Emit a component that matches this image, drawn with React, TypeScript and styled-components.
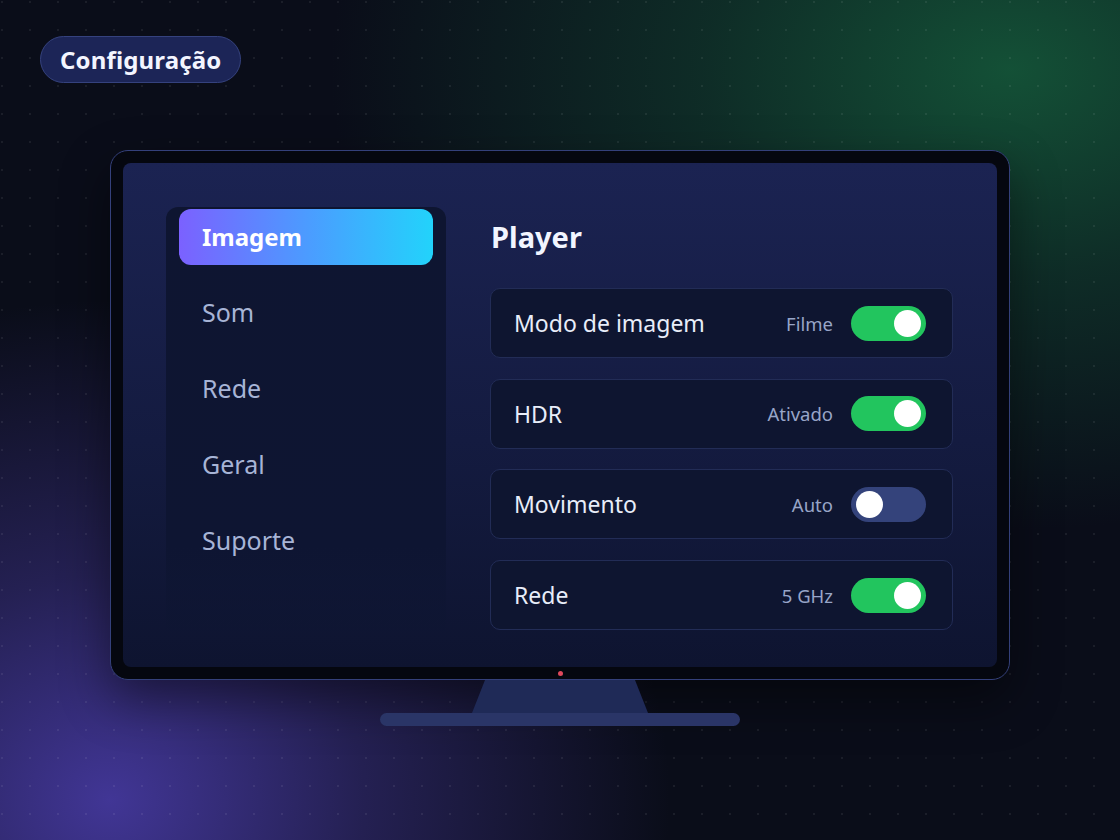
import styled, { createGlobalStyle } from "styled-components";

const GlobalStyle = createGlobalStyle`
    html, body {
        margin: 0;
        padding: 0;
    }
    body {
        font-family: "Noto Sans", "Open Sans", sans-serif;
        background: #0a0d19;
    }
    * {
        box-sizing: border-box;
    }
`

type Setting = {
    label: string;
    value: string;
    on: boolean;
}

const menu = ['Imagem', 'Som', 'Rede', 'Geral', 'Suporte'];

const settings: Setting[] = [
    { label: 'Modo de imagem', value: 'Filme', on: true },
    { label: 'HDR', value: 'Ativado', on: true },
    { label: 'Movimento', value: 'Auto', on: false },
    { label: 'Rede', value: '5 GHz', on: true },
];

export default function App() {
    return (
        <>
            <GlobalStyle />
            <Page>
                <TitlePill>Configuração</TitlePill>
                <TvWrapper>
                    <TvFrame>
                        <Screen>
                            <Sidebar>
                                {menu.map((item, i) => (
                                    <MenuItem key={item} active={i === 0}>{item}</MenuItem>
                                ))}
                            </Sidebar>
                            <Panel>
                                <PanelTitle>Player</PanelTitle>
                                <SettingList>
                                    {settings.map((s) => (
                                        <SettingRow key={s.label}>
                                            <SettingLabel>{s.label}</SettingLabel>
                                            <SettingRight>
                                                <SettingValue>{s.value}</SettingValue>
                                                <Toggle on={s.on}>
                                                    <Knob />
                                                </Toggle>
                                            </SettingRight>
                                        </SettingRow>
                                    ))}
                                </SettingList>
                            </Panel>
                        </Screen>
                        <BezelBottom>
                            <PowerLed />
                        </BezelBottom>
                    </TvFrame>
                    <StandNeck />
                    <StandBase />
                </TvWrapper>
            </Page>
        </>
    )
}

const Page = styled.div`
    width: 1120px;
    height: 840px;
    overflow: hidden;
    padding: 36px 40px 0;
    display: flex;
    flex-direction: column;
    align-items: flex-start;
    background:
        radial-gradient(circle at 2px 2px, rgba(255, 255, 255, 0.07) 1px, transparent 1.5px) 0 0 / 28px 28px,
        radial-gradient(ellipse 680px 460px at 1010px 70px, rgba(20, 84, 56, 0.95) 0%, rgba(18, 70, 50, 0.55) 45%, rgba(18, 70, 50, 0) 100%),
        radial-gradient(ellipse 560px 500px at 110px 800px, rgba(68, 56, 156, 0.95) 0%, rgba(58, 48, 130, 0.55) 45%, rgba(58, 48, 130, 0) 100%),
        #0a0d19;
`

const TitlePill = styled.div`
    height: 47px;
    padding: 0 19px;
    display: flex;
    align-items: center;
    border-radius: 24px;
    background: #1c2557;
    border: 1.5px solid #35427e;
    color: #f3f5ff;
    font-size: 24px;
    font-weight: 700;
    letter-spacing: 0.15px;
`

const TvWrapper = styled.div`
    align-self: center;
    margin-top: 67px;
    display: flex;
    flex-direction: column;
    align-items: center;
`

const TvFrame = styled.div`
    width: 900px;
    height: 530px;
    padding: 12px 12px 0;
    border-radius: 18px;
    border: 1.5px solid #34407a;
    background: #05070f;
    display: flex;
    flex-direction: column;
    box-shadow: 0 20px 50px rgba(0, 0, 0, 0.45);
`

const Screen = styled.div`
    flex: 1;
    min-height: 0;
    border-radius: 8px;
    padding: 44px 44px 36px 43px;
    background: linear-gradient(180deg, #1b2352 0%, #141b40 55%, #0e1430 100%);
    display: flex;
    gap: 44px;
`

const BezelBottom = styled.div`
    height: 12px;
    flex-shrink: 0;
    display: flex;
    align-items: center;
    justify-content: center;
`

const PowerLed = styled.div`
    width: 5px;
    height: 5px;
    border-radius: 50%;
    background: #e0485c;
`

const StandNeck = styled.div`
    width: 176px;
    height: 33px;
    background: #1f2a57;
    clip-path: polygon(13px 0, 163px 0, 176px 100%, 0 100%);
`

const StandBase = styled.div`
    width: 360px;
    height: 13px;
    border-radius: 7px;
    background: #2a3567;
`

const Sidebar = styled.div`
    width: 280px;
    padding: 2px 13px;
    border-radius: 12px 12px 0 0;
    background: linear-gradient(180deg, #0e1531 0%, #0e1532 80%, rgba(14, 21, 50, 0.4) 100%);
    display: flex;
    flex-direction: column;
    gap: 20px;
`

const MenuItem = styled.div<{ active?: boolean }>`
    height: 56px;
    padding: 0 23px 2px;
    display: flex;
    align-items: center;
    border-radius: 12px;
    font-size: ${({ active }) => active ? '24px' : '25px'};
    font-weight: ${({ active }) => active ? 700 : 400};
    color: ${({ active }) => active ? '#ffffff' : '#a7b4d6'};
    background: ${({ active }) => active ? 'linear-gradient(90deg, #7b61ff 0%, #4c9bff 50%, #22d3fb 100%)' : 'transparent'};
`

const Panel = styled.div`
    flex: 1;
    display: flex;
    flex-direction: column;
`

const PanelTitle = styled.h2`
    margin: 0;
    height: 60px;
    padding: 0 0 2px 1px;
    display: flex;
    align-items: center;
    font-size: 29px;
    font-weight: 700;
    color: #f2f5ff;
`

const SettingList = styled.div`
    margin-top: 21px;
    display: flex;
    flex-direction: column;
    gap: 20.7px;
`

const SettingRow = styled.div`
    height: 70px;
    flex-shrink: 0;
    padding: 0 26px 0 23px;
    display: flex;
    align-items: center;
    justify-content: space-between;
    border-radius: 10px;
    border: 1px solid #222c56;
    background: #0e1530;
`

const SettingLabel = styled.span`
    font-size: 23px;
    color: #e8edf9;
`

const SettingRight = styled.div`
    display: flex;
    align-items: center;
    gap: 18px;
`

const SettingValue = styled.span`
    font-size: 18.5px;
    color: #98a5c8;
`

const Toggle = styled.div<{ on: boolean }>`
    width: 75px;
    height: 35px;
    padding: 0 5px;
    border-radius: 18px;
    display: flex;
    align-items: center;
    justify-content: ${({ on }) => on ? 'flex-end' : 'flex-start'};
    background: ${({ on }) => on ? '#22c55e' : '#34437b'};
`

const Knob = styled.div`
    width: 27px;
    height: 27px;
    border-radius: 50%;
    background: #ffffff;
`
